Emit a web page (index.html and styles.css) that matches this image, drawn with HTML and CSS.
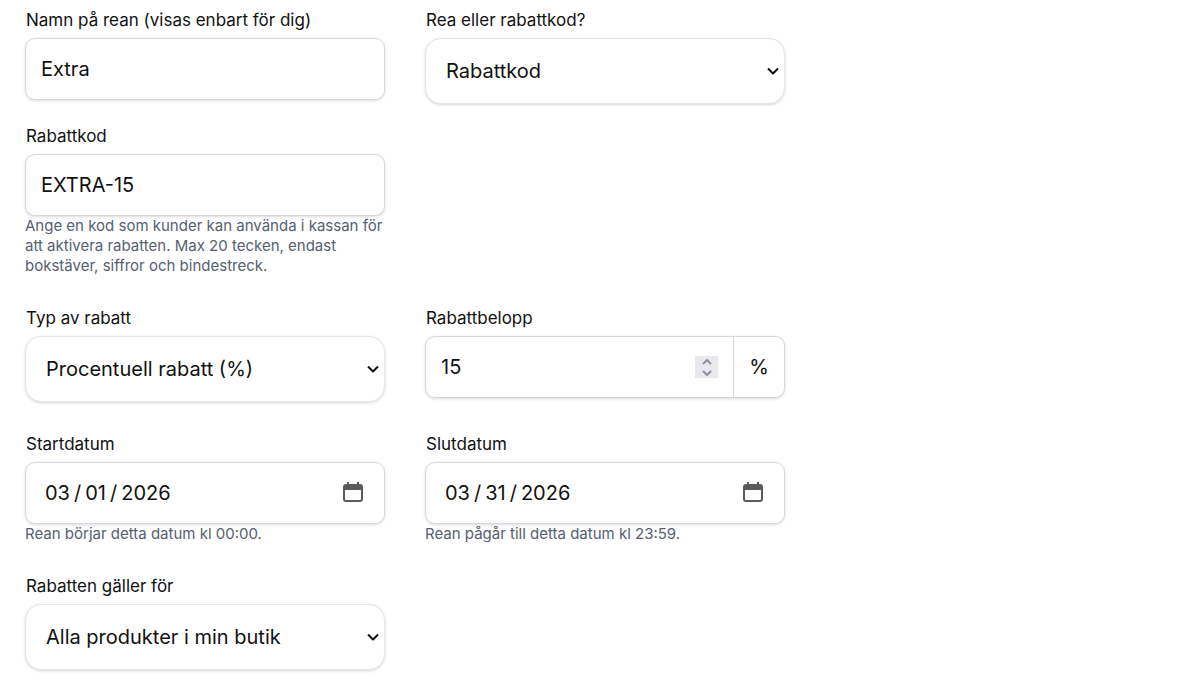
FILE: index.html
```html
<!DOCTYPE html>
<html lang="sv">
<head>
  <meta charset="UTF-8">
  <meta name="viewport" content="width=device-width, initial-scale=1.0">
  <title>Skapa rea</title>
  <link rel="stylesheet" href="styles.css">
</head>
<body>
  <form class="sale-form">
    <div class="row row-tight">
      <div class="field">
        <label for="saleName">Namn på rean (visas enbart för dig)</label>
        <input class="control" type="text" id="saleName" name="saleName" value="Extra">
      </div>
      <div class="field">
        <label for="saleKind">Rea eller rabattkod?</label>
        <div class="select-wrap">
          <select id="saleKind" name="saleKind">
            <option>Rea</option>
            <option selected>Rabattkod</option>
          </select>
          <svg class="chevron" viewBox="0 0 12 8" aria-hidden="true"><path d="M1 1.5 L6 6.5 L11 1.5"/></svg>
        </div>
      </div>
    </div>

    <div class="row">
      <div class="field">
        <label for="code">Rabattkod</label>
        <input class="control" type="text" id="code" name="code" maxlength="20" value="EXTRA-15" aria-describedby="codeHint">
        <p class="hint" id="codeHint">Ange en kod som kunder kan använda i kassan för att aktivera rabatten. Max 20 tecken, endast bokstäver, siffror och bindestreck.</p>
      </div>
    </div>

    <div class="row">
      <div class="field">
        <label for="discountType">Typ av rabatt</label>
        <div class="select-wrap">
          <select id="discountType" name="discountType">
            <option selected>Procentuell rabatt (%)</option>
            <option>Fast belopp (kr)</option>
          </select>
          <svg class="chevron" viewBox="0 0 12 8" aria-hidden="true"><path d="M1 1.5 L6 6.5 L11 1.5"/></svg>
        </div>
      </div>
      <div class="field">
        <label for="amount">Rabattbelopp</label>
        <div class="control amount">
          <input type="number" id="amount" name="amount" min="1" max="100" value="15">
          <div class="spinner">
            <button type="button" id="amountUp" aria-label="Öka"><svg viewBox="0 0 10 6" aria-hidden="true"><path d="M1 5 L5 1 L9 5"/></svg></button>
            <button type="button" id="amountDown" aria-label="Minska"><svg viewBox="0 0 10 6" aria-hidden="true"><path d="M1 1 L5 5 L9 1"/></svg></button>
          </div>
          <span class="unit">%</span>
        </div>
      </div>
    </div>

    <div class="row">
      <div class="field">
        <label for="startDate">Startdatum</label>
        <div class="date-wrap">
          <input class="control" type="date" id="startDate" name="startDate" value="2026-03-01" aria-describedby="startHint">
          <svg class="calendar" viewBox="0 0 20 20" aria-hidden="true"><path fill-rule="evenodd" d="M4 0h2v2h8V0h2v2h1a3 3 0 0 1 3 3v12a3 3 0 0 1-3 3H3a3 3 0 0 1-3-3V5a3 3 0 0 1 3-3h1zM2 8v9a1 1 0 0 0 1 1h14a1 1 0 0 0 1-1V8z"/></svg>
        </div>
        <p class="hint" id="startHint">Rean börjar detta datum kl 00:00.</p>
      </div>
      <div class="field">
        <label for="endDate">Slutdatum</label>
        <div class="date-wrap">
          <input class="control" type="date" id="endDate" name="endDate" value="2026-03-31" aria-describedby="endHint">
          <svg class="calendar" viewBox="0 0 20 20" aria-hidden="true"><path fill-rule="evenodd" d="M4 0h2v2h8V0h2v2h1a3 3 0 0 1 3 3v12a3 3 0 0 1-3 3H3a3 3 0 0 1-3-3V5a3 3 0 0 1 3-3h1zM2 8v9a1 1 0 0 0 1 1h14a1 1 0 0 0 1-1V8z"/></svg>
        </div>
        <p class="hint" id="endHint">Rean pågår till detta datum kl 23:59.</p>
      </div>
    </div>

    <div class="row">
      <div class="field">
        <label for="appliesTo">Rabatten gäller för</label>
        <div class="select-wrap">
          <select id="appliesTo" name="appliesTo">
            <option selected>Alla produkter i min butik</option>
            <option>Utvalda produkter</option>
          </select>
          <svg class="chevron" viewBox="0 0 12 8" aria-hidden="true"><path d="M1 1.5 L6 6.5 L11 1.5"/></svg>
        </div>
      </div>
    </div>
  </form>

  <script>
    var amount = document.getElementById("amount");
    document.getElementById("amountUp").addEventListener("click", function() {
      amount.stepUp();
    });
    document.getElementById("amountDown").addEventListener("click", function() {
      amount.stepDown();
    });
  </script>
</body>
</html>
```
FILE: styles.css
```css
* {
  box-sizing: border-box;
}
body {
  margin: 0;
  background-color: #ffffff;
  color: #111111;
  font-family: Inter, "Liberation Sans", sans-serif;
}
.sale-form {
  max-width: 810px;
  padding: 8px 25px;
}
.row {
  display: grid;
  grid-template-columns: repeat(2, minmax(0, 1fr));
  column-gap: 40px;
  margin-bottom: 30px;
}
.row-tight {
  margin-bottom: 20px;
}
.row:last-child {
  margin-bottom: 0;
}
label {
  display: block;
  margin-bottom: 6px;
  padding-left: 1px;
  font-size: 17px;
  line-height: 24px;
}
.control,
select {
  display: block;
  width: 100%;
  margin: 0;
  background-color: #ffffff;
  color: inherit;
  font-family: inherit;
  font-size: 20px;
}
.control {
  height: 62px;
  padding: 0 15px;
  border: 1px solid #d5d8dd;
  border-radius: 10px;
  box-shadow: 0 1px 3px rgba(0, 0, 0, 0.14);
}
.select-wrap,
.date-wrap {
  position: relative;
}
select {
  height: 66px;
  padding: 0 40px 0 20px;
  border: 1px solid #e5e7eb;
  border-radius: 16px;
  box-shadow: 0 1px 3px rgba(0, 0, 0, 0.16);
  appearance: none;
}
.chevron {
  position: absolute;
  top: 29px;
  right: 6px;
  width: 12px;
  height: 8px;
  fill: none;
  stroke: #111111;
  stroke-width: 2;
  stroke-linejoin: round;
  pointer-events: none;
}
.hint {
  margin: 0;
  color: #566072;
  font-size: 15px;
  line-height: 20px;
}

/* amount with stepper and unit */
.amount {
  display: flex;
  align-items: center;
  padding-right: 0;
}
.amount input {
  flex: 1;
  min-width: 0;
  padding: 0;
  border: none;
  background: none;
  color: inherit;
  font: inherit;
  appearance: textfield;
}
.amount input::-webkit-inner-spin-button {
  display: none;
}
.spinner {
  display: flex;
  flex-direction: column;
  width: 23px;
  height: 22px;
  margin-right: 15px;
  background-color: #e9e9ed;
}
.spinner button {
  display: flex;
  flex: 1;
  align-items: center;
  justify-content: center;
  padding: 0;
  border: none;
  background: none;
}
.spinner svg {
  width: 10px;
  height: 6px;
  fill: none;
  stroke: #8f8f9d;
  stroke-width: 2;
}
.unit {
  display: flex;
  align-items: center;
  justify-content: center;
  align-self: stretch;
  width: 51px;
  border-left: 1px solid #d5d8dd;
}

/* date fields */
input[type="date"] {
  padding: 0 20px 0 18px;
}
input[type="date"]::-webkit-datetime-edit-fields-wrapper {
  padding: 0;
}
input[type="date"]::-webkit-datetime-edit-text {
  padding: 0 3px;
}
input[type="date"]::-webkit-calendar-picker-indicator {
  opacity: 0;
}
.calendar {
  position: absolute;
  top: 20px;
  right: 22px;
  width: 20px;
  height: 20px;
  fill: #5b5b5b;
  pointer-events: none;
}
```
